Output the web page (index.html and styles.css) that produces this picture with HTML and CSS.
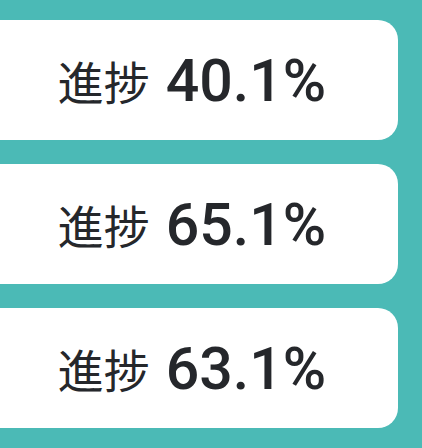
FILE: index.html
```html
<!DOCTYPE html>
<html>
	<head>
		<meta charset="UTF-8">
		<title>進捗</title>
		<link rel="stylesheet" href="styles.css">
	</head>
	<body>
		<ul class="list">
			<li class="card"><span class="label">進捗</span><span class="value">40.1%</span></li>
			<li class="card"><span class="label">進捗</span><span class="value">65.1%</span></li>
			<li class="card"><span class="label">進捗</span><span class="value">63.1%</span></li>
		</ul>
	</body>
</html>
```

FILE: styles.css
```css
* {
	margin: 0;
	padding: 0;
	list-style: none;
}

html,
body {
	height: 100%;
	background: #4bbab6;
	overflow: hidden;
}

.list {
	display: flex;
	flex-direction: column;
	gap: 24px;
	padding: 20px 24px 20px 0;
	margin-left: -40px;
	width: 462px;
	box-sizing: border-box;
}

.card {
	height: 120px;
	padding-left: 26px;
	background: #fff;
	border-radius: 20px;
	display: flex;
	align-items: center;
	justify-content: center;
	color: #25272b;
}

.label {
	font-family: "Noto Sans CJK JP", sans-serif;
	font-size: 46px;
	line-height: 1;
}

.value {
	font-family: Roboto, "Liberation Sans", sans-serif;
	font-weight: 500;
	font-size: 59px;
	line-height: 1;
	margin-left: 16px;
}
```
